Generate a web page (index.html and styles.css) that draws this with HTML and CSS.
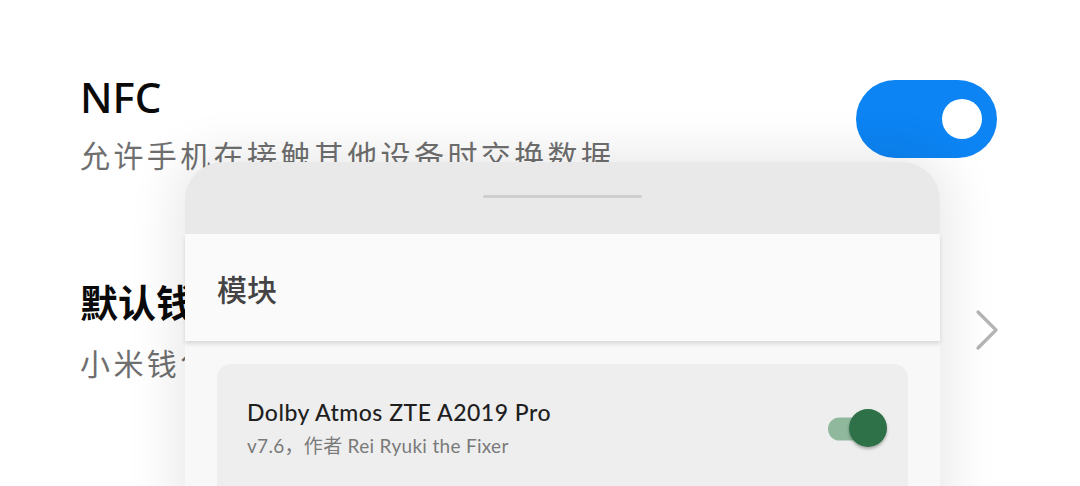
FILE: index.html
```html
<!DOCTYPE html>
<html lang="zh">
<head>
<meta charset="utf-8">
<link rel="stylesheet" href="styles.css">
</head>
<body>
<div class="page">
  <div class="settings">
    <div class="row row-nfc">
      <div class="texts">
        <div class="title title-latin">NFC</div>
        <div class="sub">允许手机在接触其他设备时交换数据</div>
      </div>
      <div class="switch"><div class="knob"></div></div>
    </div>
    <div class="row row-wallet">
      <div class="texts">
        <div class="title">默认钱包</div>
        <div class="sub">小米钱包</div>
      </div>
      <svg class="chev" width="26" height="42" viewBox="0 0 26 42"><path d="M4 3 L22 21 L4 39" fill="none" stroke="#b4b4b4" stroke-width="3.2" stroke-linecap="round" stroke-linejoin="round"/></svg>
    </div>
  </div>

  <div class="sheet">
    <div class="handle-area"><div class="handle"></div></div>
    <div class="sheet-header">模块</div>
    <div class="sheet-body">
      <div class="card">
        <div class="card-texts">
          <div class="card-title">Dolby Atmos ZTE A2019 Pro</div>
          <div class="card-sub">v7.6，作者 Rei Ryuki the Fixer</div>
        </div>
        <svg class="gswitch" width="66" height="48" viewBox="0 0 66 48">
          <defs>
            <filter id="sh" x="-30%" y="-30%" width="160%" height="170%">
              <feDropShadow dx="0" dy="2" stdDeviation="1.6" flood-color="#000" flood-opacity="0.3"/>
            </filter>
          </defs>
          <rect x="2" y="12.5" width="44" height="23" rx="11.5" fill="#8fb89d"/>
          <circle cx="42" cy="23" r="19" fill="#2e6f47" filter="url(#sh)"/>
        </svg>
      </div>
    </div>
  </div>
</div>
</body>
</html>
```

FILE: styles.css
```css
* { box-sizing: border-box; }
html, body { margin: 0; padding: 0; }
body {
  width: 1080px;
  height: 486px;
  overflow: hidden;
  background: #ffffff;
  font-family: "Noto Sans CJK SC", "Noto Sans", sans-serif;
}
.page {
  position: relative;
  width: 1080px;
  height: 486px;
  overflow: hidden;
}
.settings {
  padding: 72px 83px 0 80px;
  display: flex;
  flex-direction: column;
  gap: 102px;
}
.row {
  display: flex;
  align-items: center;
  justify-content: space-between;
}
.texts {
  display: flex;
  flex-direction: column;
  gap: 12px;
}
.row-wallet .texts { gap: 16px; }
.title {
  font-size: 38px;
  line-height: 50px;
  font-weight: 700;
  color: #0a0a0a;
}
.title-latin {
  font-family: "Noto Sans", sans-serif;
  font-weight: 500;
  font-size: 42px;
}
.sub {
  font-size: 30px;
  line-height: 40px;
  color: #6f6f6f;
  letter-spacing: 3.4px;
}
.switch {
  width: 141px;
  height: 78px;
  border-radius: 39px;
  background: #0c84f3;
  display: flex;
  align-items: center;
  justify-content: flex-end;
  padding-right: 15px;
  margin-top: -9px;
}
.knob {
  width: 40px;
  height: 40px;
  border-radius: 50%;
  background: #ffffff;
}
.chev { margin-right: -3px; margin-top: 2px; }

.sheet {
  position: absolute;
  left: 185px;
  top: 162px;
  width: 755px;
  height: 360px;
  background: #e9e9e9;
  border-radius: 38px 38px 0 0;
  box-shadow: 0 0 50px 10px rgba(0, 0, 0, 0.09);
  display: flex;
  flex-direction: column;
}
.handle-area {
  height: 72px;
  flex: none;
  display: flex;
  justify-content: center;
  padding-top: 33px;
}
.handle {
  width: 159px;
  height: 3px;
  border-radius: 2px;
  background: #cfcfcf;
}
.sheet-header {
  height: 107px;
  flex: none;
  background: #fafafa;
  padding-left: 32px;
  display: flex;
  align-items: center;
  font-size: 30px;
  font-weight: 500;
  color: #444444;
  box-shadow: 0 3px 4px rgba(0, 0, 0, 0.12);
  position: relative;
  z-index: 1;
}
.sheet-body {
  flex: 1;
  background: #f8f8f8;
  padding: 23px 32px 0 32px;
}
.card {
  background: #eeeeee;
  border-radius: 14px;
  height: 160px;
  display: flex;
  align-items: flex-start;
  justify-content: space-between;
  padding: 34px 16px 0 30px;
}
.card-texts {
  display: flex;
  flex-direction: column;
  gap: 8px;
}
.card-title {
  font-family: "Lato", "Noto Sans CJK SC", sans-serif;
  font-size: 23px;
  line-height: 28px;
  color: #1f1f1f;
  font-weight: 500;
  letter-spacing: 0.5px;
}
.card-sub {
  font-family: "Lato", "Noto Sans CJK SC", sans-serif;
  font-size: 19px;
  line-height: 24px;
  color: #7a7a7a;
  letter-spacing: 0.3px;
}
.gswitch { margin-top: 7px; }
```
